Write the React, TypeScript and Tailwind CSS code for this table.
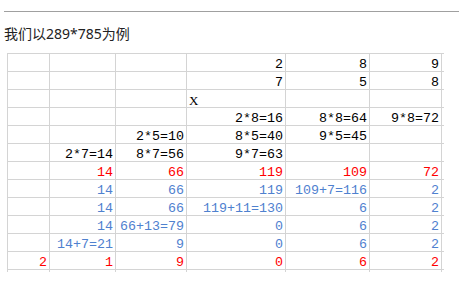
import React from "react";

type Tone = "k" | "r" | "b";

interface Row {
  tone: Tone;
  cells: string[];
}

const colWidths = ["w-[42px]", "w-[66px]", "w-[71px]", "w-[99px]", "w-[84px]", "w-[72px]"];

const rows: Row[] = [
  { tone: "k", cells: ["", "", "", "2", "8", "9"] },
  { tone: "k", cells: ["", "", "", "7", "5", "8"] },
  { tone: "k", cells: ["", "", "", "X", "", ""] },
  { tone: "k", cells: ["", "", "", "2*8=16", "8*8=64", "9*8=72"] },
  { tone: "k", cells: ["", "", "2*5=10", "8*5=40", "9*5=45", ""] },
  { tone: "k", cells: ["", "2*7=14", "8*7=56", "9*7=63", "", ""] },
  { tone: "r", cells: ["", "14", "66", "119", "109", "72"] },
  { tone: "b", cells: ["", "14", "66", "119", "109+7=116", "2"] },
  { tone: "b", cells: ["", "14", "66", "119+11=130", "6", "2"] },
  { tone: "b", cells: ["", "14", "66+13=79", "0", "6", "2"] },
  { tone: "b", cells: ["", "14+7=21", "9", "0", "6", "2"] },
  { tone: "r", cells: ["2", "1", "9", "0", "6", "2"] },
];

const toneClass: Record<Tone, string> = {
  k: "text-black",
  r: "text-[#ff0000]",
  b: "text-[#4f81cf]",
};

export default function App() {
  return (
    <div className="w-[459px] h-[285px] bg-white overflow-hidden">
      <div className="pt-[11px] pl-[4px]">
        <div className="h-px bg-[#a0a0a0]" />
      </div>

      <p className="ml-[4px] mt-[12px] text-[14px] leading-[20px] text-[#222] font-['Noto_Sans','Noto_Sans_CJK_SC',sans-serif]">
        我们以289*785为例
      </p>

      <div className="ml-[7px] mt-[9px] font-['Liberation_Mono',monospace] text-[13.33px]">
        <div className="border-l border-t border-[#d4d4d4] w-max">
          {rows.map((row, ri) => (
            <div key={ri} className="flex">
              {row.cells.map((txt, ci) => (
                <div
                  key={ci}
                  className={`${colWidths[ci]} h-[18px] border-r border-b border-[#d4d4d4] flex items-end leading-[12px] whitespace-nowrap ${
                    txt === "X"
                      ? "justify-start pl-[2px] font-['Liberation_Serif',serif] text-[13px]"
                      : "justify-end pr-[2px]"
                  } ${toneClass[row.tone]}`}
                >
                  {txt}
                </div>
              ))}
              <div className="w-[2px] h-[18px] border-b border-[#d4d4d4]" />
            </div>
          ))}
          <div className="flex">
            {colWidths.map((w, ci) => (
              <div key={ci} className={`${w} h-[2px] border-r border-[#d4d4d4]`} />
            ))}
          </div>
        </div>
      </div>
    </div>
  );
}
